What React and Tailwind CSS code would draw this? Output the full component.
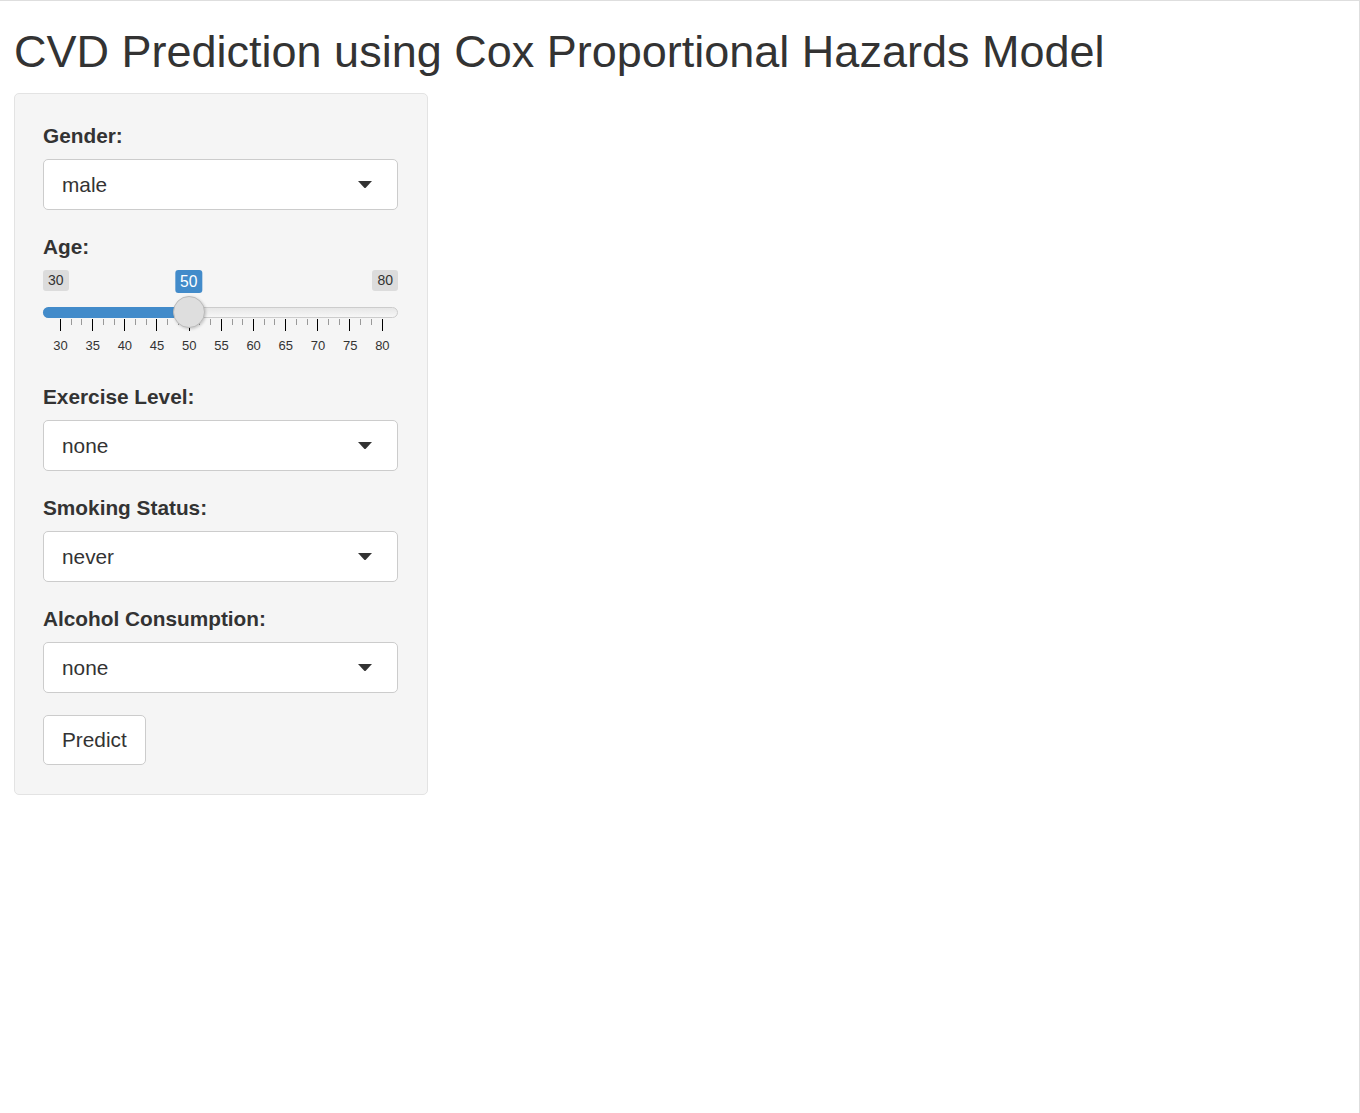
import React from 'react';

const font = { fontFamily: '"Liberation Sans", Arial, Helvetica, sans-serif' };

const MIN = 30;
const MAX = 80;
const VALUE = 50;
// handle travel inside the track, px
const PAD = 17;
const TRAVEL = 322;

function Caret() {
  return (
    <svg width="14" height="7" viewBox="0 0 14 7" className="block">
      <polygon points="0,0 14,0 7.5,7 6.5,7" fill="#333" />
    </svg>
  );
}

function Label({ children }) {
  return <div className="text-[20.8px] leading-[30px] font-bold text-[#333] mb-[8px]">{children}</div>;
}

function Field({ label, value }) {
  return (
    <div className="mb-[22px]">
      <Label>{label}</Label>
      <div className="h-[51px] flex items-center justify-between bg-white border border-[#cccccc] rounded-[5px] pl-[18px] pr-[25px] text-[20.8px] text-[#333]">
        <span>{value}</span>
        <Caret />
      </div>
    </div>
  );
}

function AgeSlider() {
  const handleX = PAD + ((VALUE - MIN) / (MAX - MIN)) * TRAVEL;
  const marks = [];
  for (let v = MIN; v <= MAX; v += 5) marks.push(v);
  const ticks = Array.from({ length: 31 }, (_, i) => i % 3 === 0);

  return (
    <div className="mb-[29px]">
      <div className="relative h-[23px] flex justify-between items-start">
        <span className="h-[21px] px-[5px] leading-[21px] text-[14px] text-[#333] bg-[rgba(0,0,0,0.1)] rounded-[3px]">30</span>
        <span className="h-[21px] px-[5px] leading-[21px] text-[14px] text-[#333] bg-[rgba(0,0,0,0.1)] rounded-[3px]">80</span>
        <span
          className="absolute top-0 h-[23px] px-[5px] leading-[23px] text-[15.6px] text-white bg-[#428bca] rounded-[3px] -translate-x-1/2"
          style={{ left: handleX }}
        >
          {VALUE}
        </span>
      </div>

      <div className="relative mt-[14px] h-[11px] rounded-full border border-[#cccccc] bg-[linear-gradient(to_bottom,#dedede_-50%,#fff_150%)]">
        <div className="h-[11px] -mt-px -ml-px rounded-l-full bg-[#428bca]" style={{ width: handleX + 1 }} />
        <div
          className="absolute top-[-12px] w-[32px] h-[32px] rounded-full bg-[#dedede] border border-[#bbbbbb] shadow-[1px_1px_3px_rgba(0,0,0,0.2)] -translate-x-1/2"
          style={{ left: handleX - 0.5 }}
        />
      </div>

      <div className="mt-px h-[12px] flex justify-between items-start pl-[17px] pr-[15px]">
        {ticks.map((major, i) => (
          <div key={i} className={major ? 'w-px h-[12px] bg-black' : 'w-px h-[6px] bg-[#999]'} />
        ))}
      </div>

      <div className="mt-[7px] flex justify-between pl-[17px] pr-[15px]">
        {marks.map((v) => (
          <div key={v} className="w-px flex justify-center">
            <span className="text-[13px] leading-[15px] text-[#333]">{v}</span>
          </div>
        ))}
      </div>
    </div>
  );
}

export default function App() {
  return (
    <div style={font} className="min-h-[1113px] bg-white border-t border-r border-[#dedede] px-[14px] text-[#333]">
      <h2 className="mt-[24px] mb-[14px] text-[45px] leading-[54px] font-normal text-[#333]">
        CVD Prediction using Cox Proportional Hazards Model
      </h2>

      <div className="w-[414px] bg-[#f5f5f5] border border-[#e3e3e3] rounded-[5px] pl-[28px] pr-[29px] pt-[27px] pb-[29px]">
        <Field label="Gender:" value="male" />

        <Label>Age:</Label>
        <AgeSlider />

        <Field label="Exercise Level:" value="none" />
        <Field label="Smoking Status:" value="never" />
        <Field label="Alcohol Consumption:" value="none" />

        <button
          type="button"
          className="block h-[50px] px-[18px] bg-white border border-[#cccccc] rounded-[5px] text-[20.8px] text-[#333]"
        >
          Predict
        </button>
      </div>
    </div>
  );
}
